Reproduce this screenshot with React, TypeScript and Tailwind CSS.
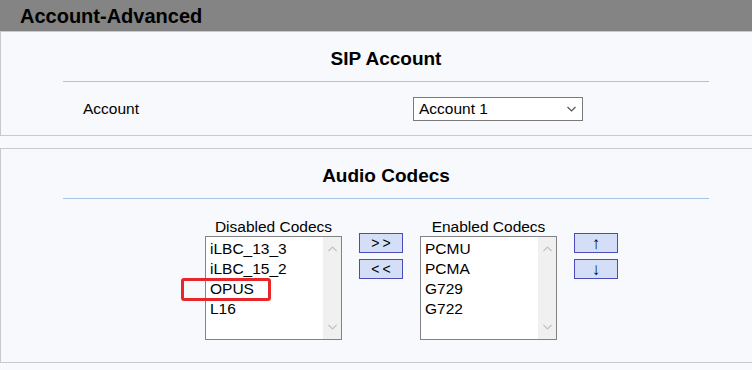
import React, {FC} from 'react';

const disabledCodecs = ['iLBC_13_3', 'iLBC_15_2', 'OPUS', 'L16'];
const enabledCodecs = ['PCMU', 'PCMA', 'G729', 'G722'];

const Chevron: FC<{ up?: boolean, className?: string }> = ({up, className}) => (
    <svg width="9" height="6" viewBox="0 0 9 6" className={className}>
        <path d={up ? "M0.5 5 L4.5 1 L8.5 5" : "M0.5 1 L4.5 5 L8.5 1"} fill="none" stroke="currentColor"
              strokeWidth="1.2"/>
    </svg>
);

const ListBox: FC<{ label: string, items: string[], highlight?: string }> = ({label, items, highlight}) => (
    <div className="flex flex-col w-[137px]">
        <div className="text-center leading-[18px] h-[18px] text-[15.5px]">{label}</div>
        <div className="relative flex h-[104px] border border-[#838383] bg-white">
            <div className="flex-1 flex flex-col pt-[2px] pl-[4px]">
                {items.map(item => (
                    <div key={item} className="relative leading-[20px] h-[20px] text-[15.5px]">
                        {item}
                        {item === highlight &&
                            <div
                                className="absolute left-[-29px] top-[-1px] w-[90px] h-[23px] border-[3px] border-[#e8262a] rounded-[3px]"/>}
                    </div>
                ))}
            </div>
            <div className="w-[18px] bg-[#f0f0f0] flex flex-col justify-between items-center py-[9px] text-[#c2c2c2]">
                <Chevron up/>
                <Chevron/>
            </div>
        </div>
    </div>
);

const SmallButton: FC<{ children: React.ReactNode }> = ({children}) => (
    <div
        className="w-[44px] h-[20px] border border-[#4b4bba] bg-[#d4dff7] flex items-center justify-center text-[14px] leading-none text-black">
        {children}
    </div>
);

const SectionTitle: FC<{ title: string }> = ({title}) => (
    <>
        <div className="pt-[16px] w-[770px] text-center font-bold text-[19px] leading-[22px]">{title}</div>
        <div className="mt-[11px] ml-[62px] w-[646px] h-px bg-[#a9c3e3]"/>
    </>
);

export default function App() {
    return (
        <div
            className="w-[752px] h-[370px] overflow-hidden bg-[#f7f9fc] text-black"
            style={{fontFamily: '"Liberation Sans", Arial, sans-serif'}}
        >
            <div className="h-[31px] bg-[#848484] pl-[20px] flex items-center">
                <span className="font-bold text-[20px] leading-none">Account-Advanced</span>
            </div>
            <div className="border-t border-b border-l border-[#c9c9c9] w-[780px]">
                <SectionTitle title="SIP Account"/>
                <div className="flex items-center mt-[15px] pb-[14px]">
                    <div className="w-[412px] pl-[82px] text-[15.5px]">Account</div>
                    <div
                        className="w-[170px] h-[24px] border border-[#7a7a7a] bg-white flex items-center justify-between pl-[5px] pr-[6px] text-[15.5px]">
                        <span>Account 1</span>
                        <Chevron className="text-[#555555]"/>
                    </div>
                </div>
            </div>
            <div className="mt-[12px] border-t border-b border-l border-[#c9c9c9] w-[780px]">
                <SectionTitle title="Audio Codecs"/>
                <div className="flex mt-[19px] pb-[22px] pl-[204px] gap-[17px]">
                    <ListBox label="Disabled Codecs" items={disabledCodecs} highlight="OPUS"/>
                    <div className="flex flex-col gap-[6px] pt-[15px]">
                        <SmallButton><span className="tracking-[3px] pl-[3px]">&gt;&gt;</span></SmallButton>
                        <SmallButton><span className="tracking-[3px] pl-[3px]">&lt;&lt;</span></SmallButton>
                    </div>
                    <ListBox label="Enabled Codecs" items={enabledCodecs}/>
                    <div className="flex flex-col gap-[6px] pt-[15px]">
                        <SmallButton><span className="text-[17px] leading-[18px] pt-[2px]">↑</span></SmallButton>
                        <SmallButton><span className="text-[17px] leading-[18px] pt-[2px]">↓</span></SmallButton>
                    </div>
                </div>
            </div>
        </div>
    );
}
